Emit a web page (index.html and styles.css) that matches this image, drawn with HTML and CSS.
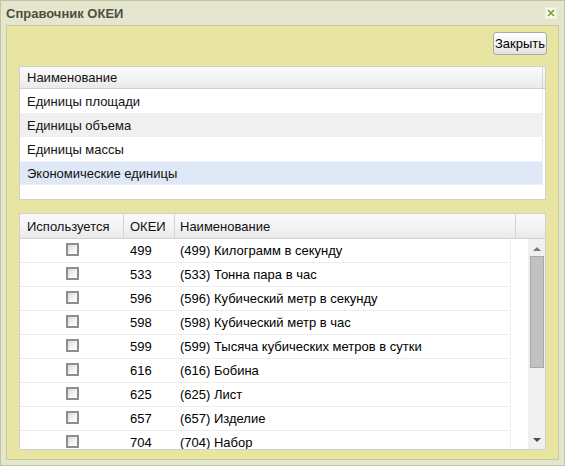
FILE: index.html
```html
<!DOCTYPE html>
<html>
<head>
<meta charset="utf-8">
<link rel="stylesheet" href="styles.css">
</head>
<body>
<div class="window">
  <div class="titlebar">
    <span class="title">Справочник ОКЕИ</span>
    <svg class="close" width="12" height="12" viewBox="0 0 12 12">
      <rect x="0.5" y="0.5" width="11" height="11" fill="#f8f9e8" stroke="#eef0d6"/>
      <path d="M3 3 L9 9 M9 3 L3 9" stroke="#6f9a34" stroke-width="1.5" fill="none"/>
    </svg>
  </div>
  <div class="body">
    <div class="toolbar">
      <button class="btn">Закрыть</button>
    </div>
    <div class="grid grid1">
      <div class="ghead">
        <div class="hcell hcell-main">Наименование</div>
        <div class="hcell-fill"></div>
      </div>
      <div class="g1rows">
        <div class="g1row">Единицы площади</div>
        <div class="g1row alt">Единицы объема</div>
        <div class="g1row">Единицы массы</div>
        <div class="g1row sel">Экономические единицы</div>
      </div>
    </div>
    <div class="grid grid2">
      <div class="ghead g2head">
        <div class="hcell c1">Используется</div>
        <div class="hcell c2">ОКЕИ</div>
        <div class="hcell c3">Наименование</div>
        <div class="hcell-fill"></div>
      </div>
      <div class="g2body">
        <div class="g2rows">
          <div class="g2row"><div class="d1"><span class="cb"></span></div><div class="d2">499</div><div class="d3">(499) Килограмм в секунду</div></div>
          <div class="g2row"><div class="d1"><span class="cb"></span></div><div class="d2">533</div><div class="d3">(533) Тонна пара в час</div></div>
          <div class="g2row"><div class="d1"><span class="cb"></span></div><div class="d2">596</div><div class="d3">(596) Кубический метр в секунду</div></div>
          <div class="g2row"><div class="d1"><span class="cb"></span></div><div class="d2">598</div><div class="d3">(598) Кубический метр в час</div></div>
          <div class="g2row"><div class="d1"><span class="cb"></span></div><div class="d2">599</div><div class="d3">(599) Тысяча кубических метров в сутки</div></div>
          <div class="g2row"><div class="d1"><span class="cb"></span></div><div class="d2">616</div><div class="d3">(616) Бобина</div></div>
          <div class="g2row"><div class="d1"><span class="cb"></span></div><div class="d2">625</div><div class="d3">(625) Лист</div></div>
          <div class="g2row"><div class="d1"><span class="cb"></span></div><div class="d2">657</div><div class="d3">(657) Изделие</div></div>
          <div class="g2row"><div class="d1"><span class="cb"></span></div><div class="d2">704</div><div class="d3">(704) Набор</div></div>
        </div>
        <div class="scrollbar">
          <div class="sb-btn"><span class="arr-up"></span></div>
          <div class="sb-thumb"></div>
          <div class="sb-space"></div>
          <div class="sb-btn"><span class="arr-down"></span></div>
        </div>
      </div>
    </div>
  </div>
</div>
</body>
</html>
```
FILE: styles.css
```css
* { box-sizing: border-box; }
html, body { margin: 0; padding: 0; background: #ffffff; }
body {
  font-family: "Liberation Sans", Arial, sans-serif;
  font-size: 13px;
  color: #000;
}
.window {
  width: 565px;
  height: 466px;
  border: 1px solid #c4c49c;
  background: #e5e6d0;
  padding: 0 5px 5px 5px;
  display: flex;
  flex-direction: column;
}
.titlebar {
  height: 24px;
  margin: 0 -5px;
  padding: 0 7px 0 5px;
  display: flex;
  align-items: center;
  justify-content: space-between;
}
.title {
  font-weight: bold;
  font-size: 13px;
  color: #4f4f3a;
}
.close { display: block; margin-top: -1px; }
.body {
  flex: 1;
  border: 1px solid #c9c99c;
  background: #e8e5a2;
  padding: 6px 12px 9px 12px;
  display: flex;
  flex-direction: column;
}
.toolbar {
  display: flex;
  justify-content: flex-end;
  height: 23px;
  margin-right: -1px;
}
.btn {
  font-family: "Liberation Sans", Arial, sans-serif;
  font-size: 13px;
  color: #000;
  height: 23px;
  width: 54px;
  padding: 0;
  border: 1px solid #a9a9a9;
  border-radius: 3px;
  background: linear-gradient(#ffffff, #f4f4f4 50%, #e2e2e2);
}
.grid {
  border: 1px solid #d0d0d0;
  background: #ffffff;
  display: flex;
  flex-direction: column;
}
.grid1 { margin-top: 11px; height: 134px; }
.grid2 { margin-top: 13px; height: 237px; }
.ghead {
  display: flex;
  height: 22px;
  border-bottom: 1px solid #d0d0d0;
  background: linear-gradient(#fafafa, #f4f4f4 50%, #e9e9e9);
}
.g2head { height: 25px; }
.hcell {
  display: flex;
  align-items: center;
  padding-left: 7px;
  border-right: 1px solid #d4d4d4;
  color: #111;
}
.hcell-main { width: 523px; }
.hcell-fill { flex: 1; }
.c1 { width: 104px; }
.c2 { width: 51px; padding-left: 6px; }
.c3 { width: 341px; padding-left: 5px; }
.g1rows { display: flex; flex-direction: column; }
.g1row {
  height: 24px;
  width: 523px;
  display: flex;
  align-items: center;
  padding-left: 7px;
  border-right: 1px solid #ededed;
  color: #111;
}
.g1row.alt { background: #f0f0f0; }
.g1row.sel {
  background: #dfe8f6;
  border-top: 1px dotted #f4f7fb;
  border-bottom: 1px dotted #f4f7fb;
}
.g2body {
  flex: 1;
  display: flex;
  overflow: hidden;
}
.g2rows {
  flex: 1;
  display: flex;
  flex-direction: column;
}
.g2row {
  width: 491px;
  height: 24px;
  flex: none;
  display: flex;
  border-bottom: 1px solid #ededed;
  border-right: 1px solid #ededed;
}
.d1 { width: 104px; display: flex; justify-content: center; padding-top: 4px; padding-left: 1px; }
.d2 { width: 51px; padding-left: 6px; display: flex; align-items: center; }
.d3 { flex: 1; padding-left: 5px; display: flex; align-items: center; white-space: nowrap; }
.cb {
  display: block;
  width: 13px;
  height: 13px;
  border: 2px solid #8e8e8e;
  background: linear-gradient(135deg, #d9d9d9, #f6f6f6 60%, #ffffff);
}
.scrollbar {
  width: 17px;
  flex: none;
  background: #f0f0f0;
  display: flex;
  flex-direction: column;
}
.sb-btn {
  height: 17px;
  display: flex;
  align-items: center;
  justify-content: center;
}
.arr-up {
  width: 0; height: 0;
  border-left: 4px solid transparent;
  border-right: 4px solid transparent;
  border-bottom: 4px solid #7a7a7a;
  margin-top: 2px;
}
.arr-down {
  width: 0; height: 0;
  border-left: 4px solid transparent;
  border-right: 4px solid transparent;
  border-top: 4px solid #4a4a4a;
  margin-top: -2px;
}
.sb-thumb {
  height: 112px;
  margin: 0 1px 0 2px;
  background: #c1c1c1;
  border: 1px solid #a8a8a8;
}
.sb-space { flex: 1; }
```
